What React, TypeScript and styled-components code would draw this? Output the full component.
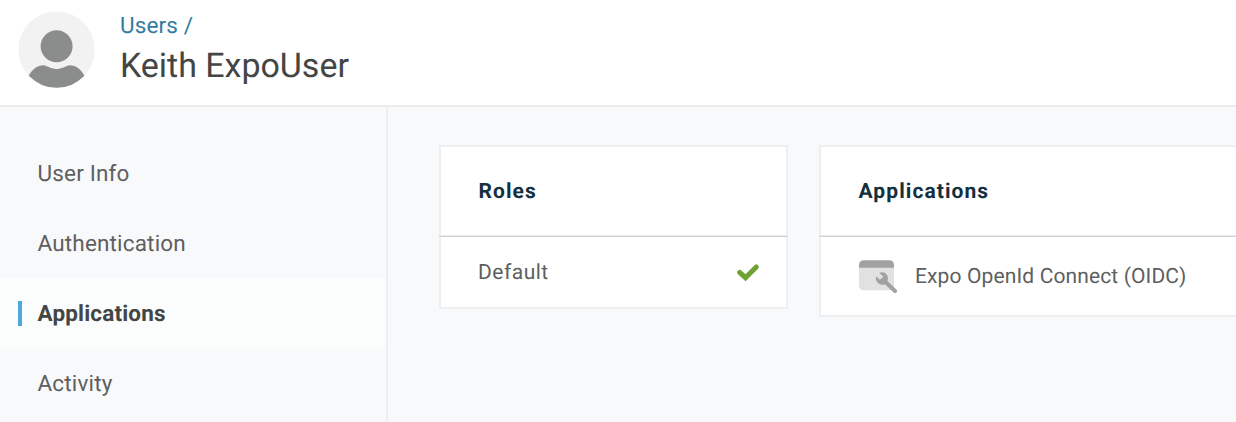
import React from "react";
import styled, { createGlobalStyle } from "styled-components";

const GlobalStyle = createGlobalStyle`
  *, *::before, *::after { box-sizing: border-box; }
  html, body { margin: 0; overflow: hidden; }
  body {
    background: #f8f9fb;
    font-family: Roboto, "Liberation Sans", sans-serif;
    -webkit-font-smoothing: antialiased;
    text-rendering: geometricPrecision;
  }
`;

const Page = styled.div`
  display: flex;
  flex-direction: column;
  height: 422px;
  width: 1236px;
  overflow: hidden;
`;

const Header = styled.header`
  display: flex;
  flex: none;
  height: 107px;
  padding: 11px 0 0 18px;
  background: #fff;
  border-bottom: 2px solid #ebebec;
`;

const Avatar = styled.svg`
  display: block;
  flex: none;
  width: 77px;
  height: 77px;
`;

const HeaderText = styled.div`
  margin-left: 25px;
`;

const Breadcrumb = styled.a`
  display: block;
  height: 28px;
  line-height: 31px;
  font-size: 22.5px;
  letter-spacing: 0.15px;
  color: #337ba1;
`;

const Title = styled.h1`
  margin: 6px 0 0;
  line-height: 42px;
  font-size: 34px;
  font-weight: 400;
  letter-spacing: -0.03px;
  color: #444645;
`;

const Body = styled.div`
  display: flex;
  flex: 1;
  min-height: 0;
`;

const Sidebar = styled.nav`
  flex: none;
  width: 388px;
  padding-top: 31px;
  border-right: 2px solid #eeeff0;
`;

const NavItem = styled.a<{ $active?: boolean }>`
  display: flex;
  align-items: center;
  height: 70px;
  padding-left: 18px;
  line-height: 26px;
  font-size: 22.5px;
  letter-spacing: 0.17px;
  font-weight: ${(p) => (p.$active ? 700 : 400)};
  color: ${(p) => (p.$active ? "#444645" : "#5e5f5f")};
  background: ${(p) => (p.$active ? "#fbfdfc" : "transparent")};

  &::before {
    content: "";
    width: 4px;
    height: 25px;
    margin-right: 15.5px;
    background: ${(p) => (p.$active ? "#4fa8dc" : "transparent")};
  }
`;

const NavLabel = styled.span`
  padding-top: 2px;
`;

const Content = styled.main`
  display: flex;
  flex: none;
  align-items: flex-start;
  gap: 31px;
  padding: 38px 0 0 51px;
`;

const Card = styled.section<{ $width: number }>`
  flex: none;
  width: ${(p) => p.$width}px;
  background: linear-gradient(#fff, #fff) padding-box;
  border: 2px solid #eeeff1;
`;

const CardTitle = styled.h2`
  height: 90px;
  margin: 0 -2px;
  padding: 0 39.5px;
  line-height: 90px;
  font-size: 21px;
  font-weight: 700;
  letter-spacing: 1.08px;
  color: #13303f;
  border-bottom: 1px solid #d0d2d3;
  box-shadow: inset 0 -1px #e9eaea;
`;

const CardRow = styled.div<{ $height: number }>`
  display: flex;
  align-items: center;
  height: ${(p) => p.$height}px;
  padding: 0 26px 0 37px;
  line-height: 24px;
  font-size: 21px;
  color: #5e5f5f;
`;

const Check = styled.svg`
  display: block;
  width: 24px;
  height: 20px;
  margin-left: auto;
`;

const AppIcon = styled.svg`
  display: block;
  width: 40px;
  height: 34px;
  margin-right: 17px;
`;

const RoleName = styled.span`
  padding-top: 2px;
  letter-spacing: 0.5px;
`;

const AppName = styled.span`
  padding-top: 1px;
  letter-spacing: 0.13px;
`;

const NAV = ["User Info", "Authentication", "Applications", "Activity"];

export default function App() {
  return (
    <Page>
      <GlobalStyle />
      <Header>
        <Avatar viewBox="0 0 77 77">
          <defs>
            <clipPath id="disc">
              <circle cx="38.6" cy="38.6" r="38.2" />
            </clipPath>
          </defs>
          <circle cx="38.6" cy="38.6" r="38.2" fill="#f2f2f2" />
          <circle cx="38.6" cy="35.2" r="16" fill="#8b8d8c" />
          <path
            clipPath="url(#disc)"
            fill="#8b8d8c"
            d="M10 66 C14 58 20 54.3 25 54.3 C29 54.3 32 58 38.6 58 C45.2 58 48.2 54.3 52.2 54.3 C57.2 54.3 63.2 58 67.2 66 L67 78 H10 Z"
          />
        </Avatar>
        <HeaderText>
          <Breadcrumb>Users /</Breadcrumb>
          <Title>Keith ExpoUser</Title>
        </HeaderText>
      </Header>
      <Body>
        <Sidebar>
          {NAV.map((label) => (
            <NavItem key={label} $active={label === "Applications"}>
              <NavLabel>{label}</NavLabel>
            </NavItem>
          ))}
        </Sidebar>
        <Content>
          <Card $width={349}>
            <CardTitle>Roles</CardTitle>
            <CardRow $height={70}>
              <RoleName>Default</RoleName>
              <Check viewBox="0 0 24 20">
                <path
                  d="M3.6 10.4 L9.5 15.7 L20.3 4.9"
                  fill="none"
                  stroke="#6fa233"
                  strokeWidth="5"
                  strokeLinecap="round"
                  strokeLinejoin="miter"
                />
              </Check>
            </CardRow>
          </Card>
          <Card $width={520}>
            <CardTitle>Applications</CardTitle>
            <CardRow $height={78}>
              <AppIcon viewBox="0 0 40 34">
                <path d="M1 8 H36 V26.3 Q36 31.3 31 31.3 H6 Q1 31.3 1 26.3 Z" fill="#e1e1e1" />
                <path d="M1 8.8 V6.3 Q1 1.3 6 1.3 H31 Q36 1.3 36 6.3 V8.8 Z" fill="#a1a1a1" />
                <path d="M25 20.5 L37 32" stroke="#a1a1a1" strokeWidth="4" strokeLinecap="round" />
                <path
                  d="M21.2 14 Q24.5 12.4 27.7 14.6 Q31 17.5 29.5 22 L26.5 25.4 Q22.6 26.4 20 24 Q17 21 18.2 17.2 L21.6 20.4 L24.6 19.9 L25 17.2 Z"
                  fill="#a1a1a1"
                />
              </AppIcon>
              <AppName>Expo OpenId Connect (OIDC)</AppName>
            </CardRow>
          </Card>
        </Content>
      </Body>
    </Page>
  );
}
